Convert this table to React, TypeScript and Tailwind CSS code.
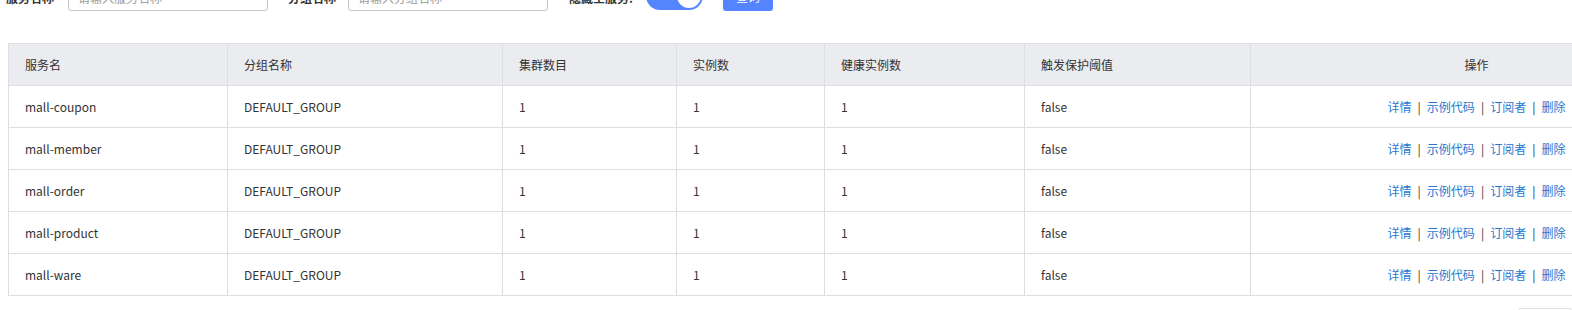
import React from "react";

const services = ["mall-coupon", "mall-member", "mall-order", "mall-product", "mall-ware"];

const columns = [
  { title: "服务名", width: "w-[219px]" },
  { title: "分组名称", width: "w-[275px]" },
  { title: "集群数目", width: "w-[174px]" },
  { title: "实例数", width: "w-[148px]" },
  { title: "健康实例数", width: "w-[200px]" },
  { title: "触发保护阈值", width: "w-[226px]" },
  { title: "操作", width: "w-[452px]" },
];

function FilterBar() {
  return (
    <div className="flex items-center h-[28px] -mt-[17px] pl-[6px] text-[12px] text-[#333]">
      <span className="font-bold w-[49px] mr-[13px] mt-[2px] whitespace-nowrap">服务名称</span>
      <input
        className="w-[200px] h-[28px] border border-[#c4c6cf] rounded-[3px] px-[9px] text-[12px] outline-none placeholder:text-[#999]"
        placeholder="请输入服务名称"
      />
      <span className="font-bold w-[49px] ml-[20px] mr-[11px] mt-[2px] whitespace-nowrap">分组名称</span>
      <input
        className="w-[200px] h-[28px] border border-[#c4c6cf] rounded-[3px] px-[9px] text-[12px] outline-none placeholder:text-[#999]"
        placeholder="请输入分组名称"
      />
      <span className="font-bold ml-[21px] mr-[13px] mt-[2px] whitespace-nowrap">隐藏空服务:</span>
      <div className="w-[57px] h-[28px] rounded-full bg-[#5584ff] flex items-center justify-end px-[2px] -mt-[3px]">
        <div className="w-[24px] h-[24px] rounded-full bg-white" />
      </div>
      <button className="ml-[20px] w-[50px] h-[28px] rounded-[3px] bg-[#5584ff] text-white text-[12px]">查询</button>
    </div>
  );
}

function Actions() {
  return (
    <div className="flex items-center justify-center text-[12px]">
      <a className="text-[#1f78d1] cursor-pointer">详情</a>
      <span className="mx-[6px] text-[#333]">|</span>
      <a className="text-[#1f78d1] cursor-pointer">示例代码</a>
      <span className="mx-[6px] text-[#333]">|</span>
      <a className="text-[#1f78d1] cursor-pointer">订阅者</a>
      <span className="mx-[6px] text-[#333]">|</span>
      <a className="text-[#1f78d1] cursor-pointer">删除</a>
    </div>
  );
}

export default function App() {
  return (
    <div className="w-[1572px] h-[310px] overflow-hidden bg-white font-['Noto_Sans_CJK_SC',sans-serif] text-[#333]">
      <FilterBar />

      <div className="pl-[8px] mt-[32px]">
        <table className="table-fixed border-collapse w-[1694px] text-[12px]">
          <colgroup>
            {columns.map((c) => (
              <col key={c.title} className={c.width} />
            ))}
          </colgroup>
          <thead>
            <tr className="h-[42px] bg-[#ebecf0]">
              {columns.map((c, i) => (
                <th
                  key={c.title}
                  className={
                    "border border-[#dcdee3] font-normal px-[16px] " +
                    (i === columns.length - 1 ? "text-center" : "text-left")
                  }
                >
                  {c.title}
                </th>
              ))}
            </tr>
          </thead>
          <tbody>
            {services.map((name) => (
              <tr key={name} className="h-[42px]">
                <td className="border border-[#dcdee3] px-[16px]">{name}</td>
                <td className="border border-[#dcdee3] px-[16px]">DEFAULT_GROUP</td>
                <td className="border border-[#dcdee3] px-[16px]">1</td>
                <td className="border border-[#dcdee3] px-[16px]">1</td>
                <td className="border border-[#dcdee3] px-[16px]">1</td>
                <td className="border border-[#dcdee3] px-[16px]">false</td>
                <td className="border border-[#dcdee3] px-[16px]">
                  <Actions />
                </td>
              </tr>
            ))}
          </tbody>
        </table>
      </div>

      <div className="flex justify-start pl-[1518px] mt-[12px]">
        <div className="w-[60px] h-[28px] border border-[#dcdee3] rounded-[3px] bg-white" />
      </div>
    </div>
  );
}
